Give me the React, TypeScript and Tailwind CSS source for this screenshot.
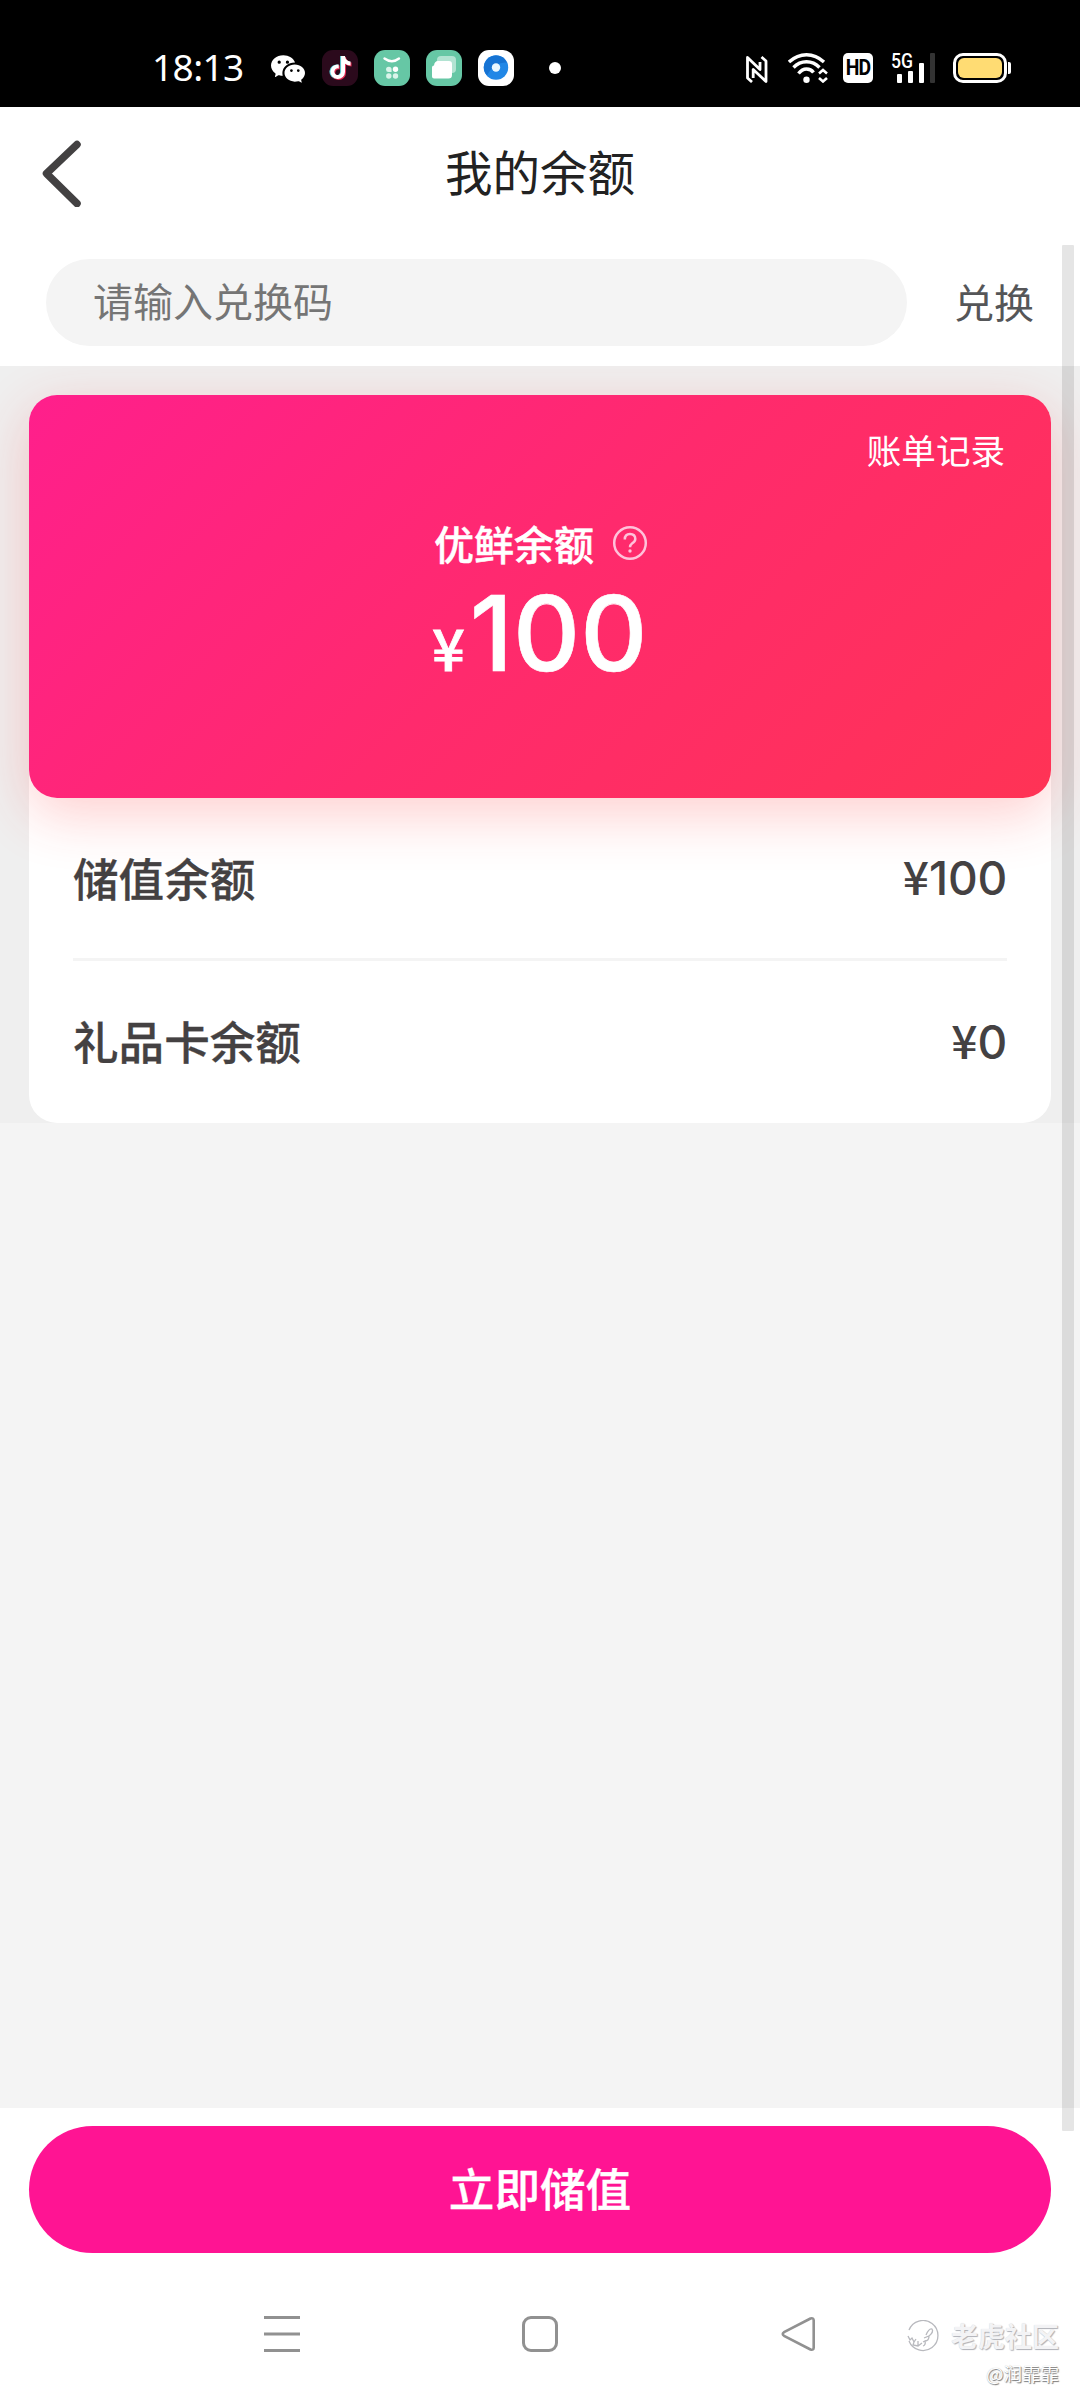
import React from "react";
import { BsWechat } from "react-icons/bs";
import { FaTiktok } from "react-icons/fa6";

function AppIcons() {
  return (
    <div className="flex items-center">
      <BsWechat className="ml-[28px] h-[34px] w-[34px] text-white" />
      <div className="relative ml-[17px] flex h-[36px] w-[36px] items-center justify-center rounded-[11px] bg-[#2b0a1c]">
        <FaTiktok className="absolute left-[6.500px] top-[5.500px] h-[23px] w-[21px] text-[#5fd5dd]" />
        <FaTiktok className="absolute left-[8.500px] top-[7px] h-[23px] w-[21px] text-[#e0284f]" />
        <FaTiktok className="absolute left-[7.500px] top-[6px] h-[23px] w-[21px] text-white" />
      </div>
      <svg className="ml-[16px]" width="36" height="36" viewBox="0 0 36 36">
        <rect width="36" height="36" rx="11" fill="#66c7a5" />
        <path d="M10.500 8.500Q18 14 25 8.500" fill="none" stroke="#fff" strokeWidth="2.400" strokeLinecap="round" />
        <g fill="#d9f4ea">
          <path d="M12 19.500a2.800 2.800 0 0 1 5.600 0v2.500h-2.800a2.600 2.600 0 0 1-2.800-2.500z" />
          <circle cx="21.500" cy="19.300" r="2.700" fill="#fff" />
          <circle cx="14.800" cy="26" r="2.700" />
          <circle cx="21.500" cy="26" r="2.700" />
        </g>
      </svg>
      <svg className="ml-[16px]" width="36" height="36" viewBox="0 0 36 36">
        <rect width="36" height="36" rx="11" fill="#66c7a5" />
        <rect x="11" y="6" width="19" height="17" rx="4" fill="#b2e3d2" />
        <path d="M12 11H23a3 3 0 0 1 3 3V25a3.500 3.500 0 0 1-3.500 3.500H8A2 2 0 0 1 6 26.500V17.500Q6 15.500 8 15.500Q8.500 11 12 11Z" fill="#fff" />
      </svg>
      <svg className="ml-[16px]" width="36" height="36" viewBox="0 0 36 36">
        <rect width="36" height="36" rx="11" fill="#fff" />
        <circle cx="18" cy="17.500" r="12.200" fill="#2187e6" />
        <path d="M6.500 13.500A12.200 12.200 0 0 1 29 12.500Q16 12 9 25.500A12 12 0 0 1 6.500 13.500Z" fill="#1673d3" />
        <circle cx="18" cy="17.500" r="4.200" fill="#e9f7ff" />
      </svg>
      <div className="ml-[35px] h-[12px] w-[12px] rounded-full bg-white" />
    </div>
  );
}

function SystemIcons() {
  return (
    <div className="flex h-[30px] items-end">
      <svg className="mr-[20px]" width="22" height="30" viewBox="0 0 22 30" fill="none" stroke="#fff" strokeWidth="2.800" strokeLinejoin="round">
        <path d="M6 29L1.500 25V4.500L14 16.500V9" />
        <path d="M15.500 4L20 8V28.500L7.200 16.500V25" />
      </svg>
      <svg className="mr-[15px]" width="40" height="30" viewBox="0 0 40 30" fill="none" stroke="#fff" strokeWidth="3.400">
        <path d="M1 9Q9 1.700 18.500 1.700T36 9" />
        <path d="M5.500 14.500Q11 8.800 18.500 8.800T31.500 14.500" />
        <path d="M10.500 20.500Q14 16 18.500 16T25.500 19.500" />
        <circle cx="18.500" cy="26.700" r="3.200" fill="#fff" stroke="none" />
        <path d="M31 20.500L35 17L39 20.500M31 25L35 28.500L39 25" strokeWidth="2.600" />
      </svg>
      <div className="mr-[18px] flex h-[30px] w-[30px] items-center justify-center rounded-[5px] bg-white font-['Roboto',sans-serif] text-[22px] font-bold leading-none tracking-[-1px] text-black">
        <span className="scale-x-[0.88]">HD</span>
      </div>
      <div className="relative mr-[18px] h-[30px] w-[44px]">
        <span className="absolute left-0 top-0 origin-left scale-x-[0.88] font-['Roboto',sans-serif] text-[20px] font-medium leading-[16px] text-white">5G</span>
        <div className="flex h-full items-end gap-[6px] pl-[6px]">
          <div className="h-[9px] w-[5px] rounded-[1px] bg-white" />
          <div className="h-[12px] w-[5px] rounded-[1px] bg-white" />
          <div className="h-[20px] w-[5px] rounded-[1px] bg-white" />
          <div className="h-[30px] w-[5px] rounded-[1px] bg-[#333333]" />
        </div>
      </div>
      <div className="flex items-center gap-[1px]">
        <div className="h-[30px] w-[54px] rounded-[10px] border-[3px] border-white p-[2px]">
          <div className="h-full w-full rounded-[6px] bg-[#ffdc73]" />
        </div>
        <div className="h-[12px] w-[3px] rounded-r-[2px] bg-white" />
      </div>
    </div>
  );
}

function BalanceRow({ label, value }: { label: string; value: string }) {
  return (
    <div className="flex items-center justify-between leading-[60px] font-medium text-[#444142]">
      <span className="text-[45.600px] [-webkit-text-stroke:0.300px_#444142]">{label}</span>
      <span className="flex items-baseline text-[46.080px]">
        <span>¥</span>
        <span className="font-['Inter',sans-serif] tracking-[-0.200px]">{value}</span>
      </span>
    </div>
  );
}

export default function App() {
  return (
    <div className="relative flex h-[2400px] w-[1080px] flex-col overflow-hidden bg-white font-['Noto_Sans_CJK_SC',sans-serif]">
      <div className="flex h-[107px] shrink-0 items-center justify-between bg-black pl-[152px] pr-[69px] pt-[30px] pb-[1px]">
        <div className="flex h-[76px] items-center">
          <span className="w-[91px] whitespace-nowrap pb-[3px] font-['Noto_Sans',sans-serif] text-[37px] leading-none tracking-[-0.600px] text-white">18:13</span>
          <AppIcons />
        </div>
        <SystemIcons />
      </div>

      <header className="relative flex h-[138px] shrink-0 items-center justify-center pb-[11px]">
        <svg className="absolute left-[40px] top-[30px]" width="44" height="70" viewBox="0 0 44 70" fill="none" stroke="#434142" strokeWidth="7.500" strokeLinecap="round" strokeLinejoin="round">
          <path d="M37 7.500L6.500 36.500L37 66.500" />
        </svg>
        <h1 className="text-[47.500px] leading-[60px] text-[#222222]">我的余额</h1>
      </header>

      <div className="flex h-[121px] shrink-0 items-start pl-[46px] pt-[14px]">
        <div className="flex h-[87px] w-[861px] items-center rounded-full bg-[#f4f4f4] pb-[5px] pl-[47px] text-[40px] text-[#757575]">
          请输入兑换码
        </div>
        <div className="flex h-[87px] items-center pb-[4px] pl-[47px] text-[40px] text-[#555658]">兑换</div>
      </div>

      <section className="h-[757px] shrink-0 overflow-hidden bg-[#efefef] px-[29px] pt-[29px]">
        <div className="h-[728px] rounded-[28px] bg-white">
          <div className="flex h-[403px] flex-col rounded-[28px] bg-linear-[135deg,#ff1f8c_0%,#ff2a6d_50%,#ff3355_100%] text-white shadow-[0_16px_56px_rgba(255,51,51,0.24)]">
            <div className="flex justify-end pr-[46px] pt-[29px] text-[34.560px] leading-[50px]">账单记录</div>
            <div className="flex items-center pl-[405px] pt-[41px]">
              <span className="text-[40px] font-medium leading-[56px] [-webkit-text-stroke:0.500px_#ffffff]">优鲜余额</span>
              <svg className="ml-[18px]" width="36" height="36" viewBox="0 0 36 36" fill="none" stroke="#ffc2da" strokeWidth="2.500">
                <circle cx="18" cy="18" r="15.800" />
                <path d="M12.800 14.500Q12.800 9 18 9T23.300 14Q23.300 16.500 20 18.500Q18 20 18 22.300" />
                <circle cx="18" cy="26" r="1.700" fill="#ffc2da" stroke="none" />
              </svg>
            </div>
            <div className="flex items-baseline pl-[403px] pt-[4px] font-medium leading-[116px]">
              <span className="text-[57.600px] [-webkit-text-stroke:0.800px_#ffffff]">¥</span>
              <span className="ml-[5px] font-['Inter',sans-serif] text-[104px] [-webkit-text-stroke:0.600px_#ffffff]">100</span>
            </div>
          </div>
          <div className="mx-[44px] flex h-[163px] flex-col justify-center border-b-[3px] border-[#f4f4f4] pb-[3px]">
            <BalanceRow label="储值余额" value="100" />
          </div>
          <div className="mx-[44px] flex h-[162px] flex-col justify-center pb-[4px]">
            <BalanceRow label="礼品卡余额" value="0" />
          </div>
        </div>
      </section>

      <main className="h-[985px] shrink-0 bg-[#f4f4f4]" />

      <div className="shrink-0 px-[29px] pt-[18px]">
        <button className="flex h-[127px] w-full items-center justify-center rounded-full bg-[#ff1493] pb-[4px] text-[45.600px] font-medium text-white [-webkit-text-stroke:0.400px_#ffffff]">
          立即储值
        </button>
      </div>

      <nav className="flex items-start pl-[264px] pt-[63px]">
        <svg width="36" height="37" viewBox="0 0 36 37" stroke="#919191" strokeWidth="3">
          <path d="M0 1.500H36M0 18H36M0 34.500H36" />
        </svg>
        <div className="ml-[222px] h-[36px] w-[36px] rounded-[9px] border-[3px] border-[#919191]" />
        <svg className="ml-[222px]" width="37" height="37" viewBox="0 0 37 37" fill="none" stroke="#919191" strokeWidth="2.600" strokeLinejoin="round">
          <path d="M30.500 2.500L4 16.200Q1.500 18 4 19.800L30.500 33.500Q33.700 34.500 33.700 31.500V4.500Q33.700 1.500 30.500 2.500Z" />
        </svg>
      </nav>

      <div className="absolute bottom-[9px] right-[21px] flex flex-col items-end text-white">
        <div className="flex items-center">
          <svg className="mr-[12px]" width="32" height="32" viewBox="0 0 32 32" fill="none" stroke="#b8b9be" strokeWidth="1.300">
            <path d="M2 10A15 15 0 1 1 2 21" />
            <path d="M1 16L3 20L5 18L7 22L9 19M7 22L6 25L11 26L15 23M11 26V21M16 26Q19 25 18 21L16 22M18 21Q22 21 22 16L17 18M22 16Q27 12 25 9Q22 8 19 15" />
          </svg>
          <span className="text-[27px] font-bold leading-[38px] text-[#f3f3f5] [text-shadow:1px_1px_1px_#aeb0b6,0_0_1px_#d2d4d9]">老虎社区</span>
        </div>
        <span className="text-[18.500px] leading-[36px] [text-shadow:1px_1px_1px_#777777,0_0_1px_#bbbbbb]">@润霏霏</span>
      </div>

      <div className="absolute left-[1062px] top-[245px] h-[1886px] w-[12px] rounded-[1px] bg-black/10" />
    </div>
  );
}
